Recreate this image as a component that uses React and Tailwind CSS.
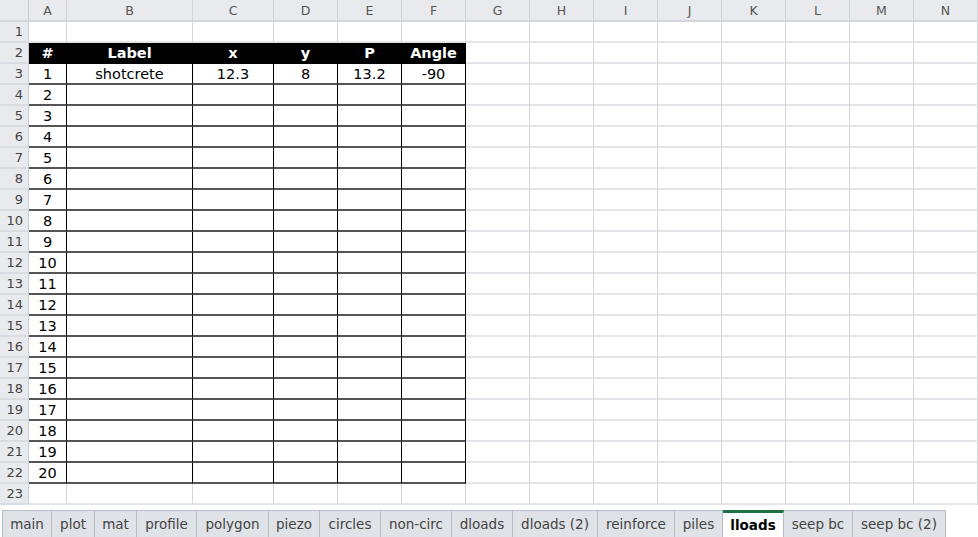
import React from 'react';

const COLS = ['A', 'B', 'C', 'D', 'E', 'F', 'G', 'H', 'I', 'J', 'K', 'L', 'M', 'N'];
const HEADERS = ['#', 'Label', 'x', 'y', 'P', 'Angle'];
const FIRST_ROW = ['1', 'shotcrete', '12.3', '8', '13.2', '-90'];

const TABS = [
  { name: 'main', w: 'w-[50px]' },
  { name: 'plot', w: 'w-[43px]' },
  { name: 'mat', w: 'w-[42px]' },
  { name: 'profile', w: 'w-[60px]' },
  { name: 'polygon', w: 'w-[72px]' },
  { name: 'piezo', w: 'w-[51px]' },
  { name: 'circles', w: 'w-[61px]' },
  { name: 'non-circ', w: 'w-[71px]' },
  { name: 'dloads', w: 'w-[61px]' },
  { name: 'dloads (2)', w: 'w-[85px]' },
  { name: 'reinforce', w: 'w-[77px]' },
  { name: 'piles', w: 'w-[48px]' },
  { name: 'lloads', w: 'w-[61px]', active: true },
  { name: 'seep bc', w: 'w-[69px]' },
  { name: 'seep bc (2)', w: 'w-[93px]' },
];

const gridCell = 'h-[21px] border-r border-b-2 border-r-[#d3d6db] border-b-[#e3e5e8] bg-white';
const tableCell = 'h-[21px] pt-[3px] border-r border-b-2 border-r-black border-b-[#555] bg-white flex items-center justify-center text-[14.5px] text-black';
const headCell = 'h-[21px] pt-[3px] border-r border-b-2 border-black bg-black flex items-center justify-center text-[14.5px] font-bold text-white';
const rowHead = 'h-[21px] pt-px border-r border-b-2 border-r-[#c9cdd3] border-b-[#d9dce0] bg-[#e8eaed] flex items-center justify-end pr-[5px] text-[13px] text-[#444]';

function cellFor(row, col) {
  const inTable = row >= 2 && row <= 22 && col <= 5;
  if (!inTable) return { cls: gridCell, text: '' };
  if (row === 2) return { cls: headCell, text: HEADERS[col] };
  if (row === 3) return { cls: tableCell, text: FIRST_ROW[col] };
  return { cls: tableCell, text: col === 0 ? String(row - 2) : '' };
}

export default function App() {
  const rows = Array.from({ length: 23 }, (_, i) => i + 1);

  return (
    <div className="w-[978px] h-[537px] overflow-hidden bg-white" style={{ fontFamily: '"DejaVu Sans", sans-serif' }}>
      <div className="grid grid-cols-[29px_38px_126px_81px_64px_64px_64px_64px_64px_64px_64px_64px_64px_64px_64px]">
        {/* column letters */}
        <div className="h-[22px] border-r border-b-2 border-r-[#c9cdd3] border-b-[#d3d6db] bg-[#e8eaed]" />
        {COLS.map(c => (
          <div key={c} className="h-[22px] pt-[3px] border-r border-b-2 border-r-[#d0d3d8] border-b-[#d3d6db] bg-[#e8eaed] flex items-center justify-center text-[12.5px] text-[#555]">
            {c}
          </div>
        ))}

        {rows.map(r => (
          <React.Fragment key={r}>
            <div className={rowHead}>{r}</div>
            {COLS.map((c, ci) => {
              const cell = cellFor(r, ci);
              return <div key={c} className={cell.cls}>{cell.text}</div>;
            })}
          </React.Fragment>
        ))}
      </div>

      {/* sheet tabs */}
      <div className="flex px-[2px] pt-[5px]">
        {TABS.map((t, i) => (
          <div
            key={t.name}
            className={`${t.w} h-[28px] shrink-0 flex items-center justify-center text-[13.5px] border-b border-r border-[#b7bcc4] ${i === 0 ? 'border-l' : ''} ${
              t.active
                ? 'bg-white border-t-[3px] border-t-[#1e7145] font-bold text-black'
                : 'bg-[#dfe2e6] border-t text-[#444]'
            }`}
          >
            {t.name}
          </div>
        ))}
      </div>
    </div>
  );
}
